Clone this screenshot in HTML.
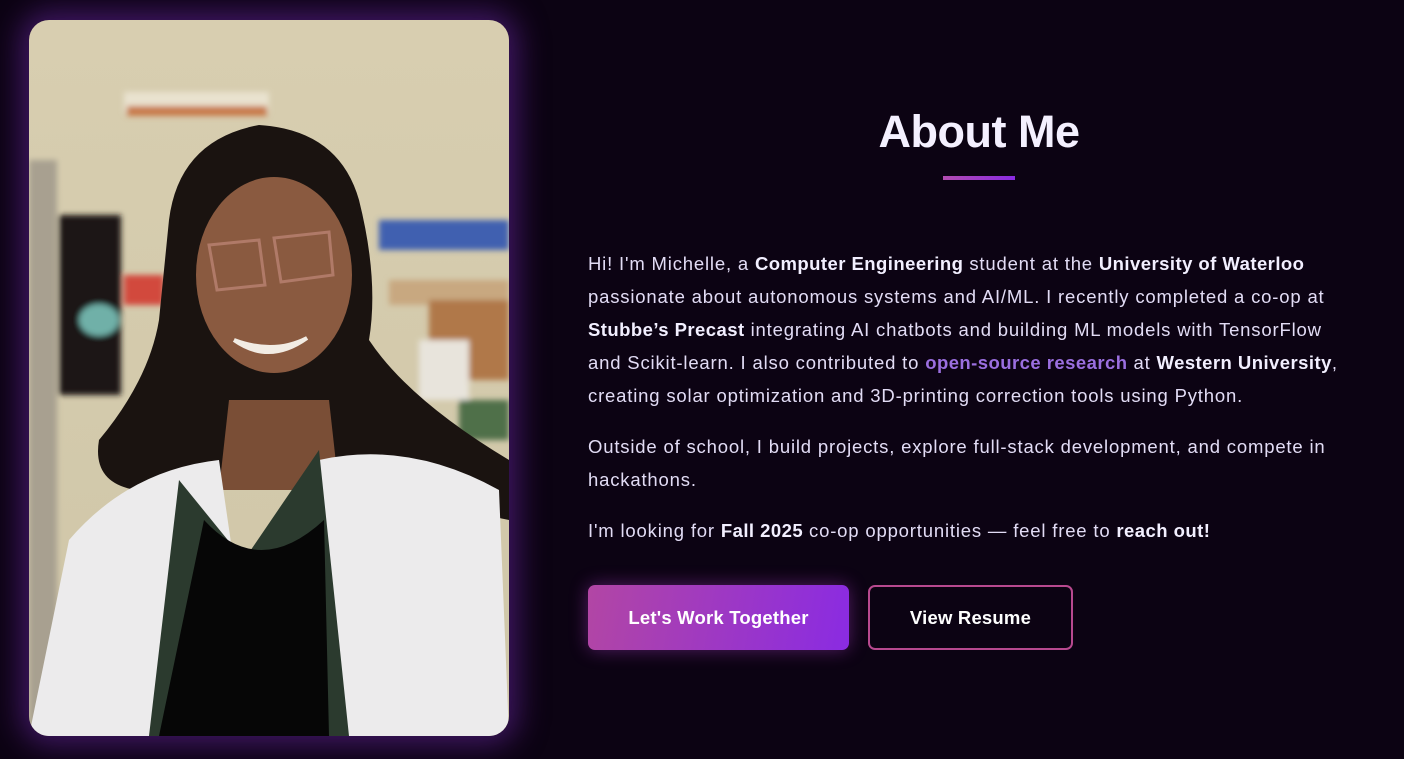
<!DOCTYPE html>
<html><head><meta charset="utf-8"><style>
*{margin:0;padding:0;box-sizing:border-box}
html,body{width:1404px;height:759px;overflow:hidden;background:#0c0313;font-family:"Liberation Sans",sans-serif}
.photo{position:absolute;left:29px;top:20px;width:480px;height:716px;border-radius:20px;overflow:hidden;box-shadow:0 0 30px 8px rgba(110,40,170,.55)}
h1{position:absolute;left:779px;width:400px;top:106px;text-align:center;color:#f4f0ff;font-size:45px;font-weight:700;letter-spacing:-0.5px}
.bar{position:absolute;left:943px;top:176px;width:72px;height:4px;background:linear-gradient(90deg,#b24cb0,#8a2be2)}
.txt{position:absolute;left:588px;top:247px;color:#e2dcf5;font-size:18.5px;line-height:33px;white-space:nowrap;letter-spacing:0.82px}
.txt b{color:#f2efff;letter-spacing:0.45px}
.txt .l{color:#9b6fe0;font-weight:700;letter-spacing:0.45px}
.txt p{margin-bottom:18px}
.btn{position:absolute;top:585px;height:65px;border-radius:7px;color:#fff;font-size:18.5px;font-weight:700;display:flex;align-items:center;justify-content:center;letter-spacing:0.2px}
.b1{left:588px;width:261px;background:linear-gradient(100deg,#b246a4,#8a2be2);box-shadow:0 0 18px rgba(170,60,200,.45)}
.b2{left:868px;width:205px;border:2px solid #b8498f;top:585px}
</style></head><body>
<div class="photo">
<svg width="480" height="716" viewBox="0 0 480 716">
<defs><linearGradient id="bg" x1="0" y1="0" x2="0" y2="1"><stop offset="0" stop-color="#d8ceb0"/><stop offset="1" stop-color="#cfc6a8"/></linearGradient>
<filter id="bl"><feGaussianBlur stdDeviation="3"/></filter></defs>
<rect width="480" height="716" fill="url(#bg)"/>
<g filter="url(#bl)">
<rect x="95" y="72" width="145" height="20" fill="#e9e2cf"/>
<rect x="98" y="86" width="140" height="10" fill="#c8794a"/>
<rect x="0" y="140" width="28" height="576" fill="#a8a090"/>
<rect x="30" y="195" width="62" height="180" fill="#1a1612"/>
<ellipse cx="70" cy="300" rx="20" ry="16" fill="#6fb0a8"/>
<rect x="95" y="255" width="40" height="30" fill="#d24a3c"/>
<rect x="350" y="200" width="130" height="30" fill="#4060b0"/>
<rect x="360" y="260" width="120" height="25" fill="#c8a880"/>
<rect x="400" y="280" width="80" height="80" fill="#b07848"/>
<rect x="390" y="320" width="50" height="60" fill="#e8e4dc"/>
<rect x="430" y="380" width="50" height="40" fill="#507048"/>
</g>
<path d="M140 200 Q150 120 230 105 Q310 110 330 180 Q350 260 340 320 Q380 380 480 440 L480 500 Q380 480 340 460 L150 470 Q60 480 70 420 Q120 360 130 300 Z" fill="#1a1310"/>
<ellipse cx="245" cy="255" rx="78" ry="98" fill="#8a5a40"/>
<path d="M180 225 L230 220 L236 265 L188 270 Z M245 218 L300 212 L304 255 L252 262 Z" fill="none" stroke="#b07a68" stroke-width="3"/>
<path d="M205 320 Q240 345 278 318 Q245 335 205 320" fill="#f2ece4" stroke="#f2ece4" stroke-width="4"/>
<path d="M200 380 L300 380 L310 470 L190 470 Z" fill="#7a4e36"/>
<path d="M0 716 L40 520 Q100 450 190 440 L230 716 Z" fill="#ecebec"/>
<path d="M290 440 Q380 420 470 470 L480 716 L300 716 Z" fill="#ecebec"/>
<path d="M150 460 L215 540 L290 430 L320 716 L120 716 Z" fill="#2b3a2e"/>
<path d="M175 500 Q230 560 295 500 L300 716 L130 716 Z" fill="#060606"/>
</svg>
</div>
<h1>About Me</h1>
<div class="bar"></div>
<div class="txt">
<p>Hi! I'm Michelle, a <b>Computer Engineering</b> student at the <b>University of Waterloo</b><br>passionate about autonomous systems and AI/ML. I recently completed a co-op at<br><b>Stubbe’s Precast</b> integrating AI chatbots and building ML models with TensorFlow<br>and Scikit-learn. I also contributed to <span class="l">open-source research</span> at <b>Western University</b>,<br>creating solar optimization and 3D-printing correction tools using Python.</p>
<p>Outside of school, I build projects, explore full-stack development, and compete in<br>hackathons.</p>
<p>I'm looking for <b>Fall 2025</b> co-op opportunities — feel free to <b>reach out!</b></p>
</div>
<div class="btn b1">Let's Work Together</div>
<div class="btn b2">View Resume</div>
</body></html>
